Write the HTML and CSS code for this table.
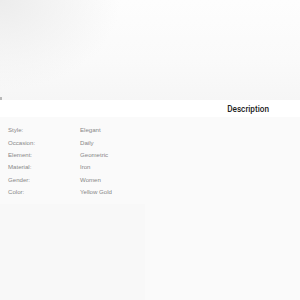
FILE: index.html
```html
<!DOCTYPE html>
<html>
<head>
<meta charset="utf-8">
<link rel="stylesheet" href="styles.css">
</head>
<body>
<div class="hero">
  <span class="hero-dot"></span>
</div>
<div class="tabbar">
  <span class="tab-title">Description</span>
</div>
<div class="specs">
  <div class="row"><span class="label">Style:</span><span class="value">Elegant</span></div>
  <div class="row"><span class="label">Occasion:</span><span class="value">Daily</span></div>
  <div class="row"><span class="label">Element:</span><span class="value">Geometric</span></div>
  <div class="row"><span class="label">Material:</span><span class="value">Iron</span></div>
  <div class="row"><span class="label">Gender:</span><span class="value">Women</span></div>
  <div class="row"><span class="label">Color:</span><span class="value">Yellow Gold</span></div>
</div>
<div class="bottom"></div>
</body>
</html>
```
FILE: styles.css
```css
html, body {
  margin: 0;
  padding: 0;
  width: 300px;
  height: 300px;
  overflow: hidden;
  background: #fafafa;
  font-family: "Liberation Sans", Arial, sans-serif;
}
.hero {
  position: relative;
  height: 100px;
  background:
    radial-gradient(ellipse 120px 90px at 0 0, #ececec 0%, rgba(240,240,240,0) 100%),
    linear-gradient(180deg, #fdfdfd 0%, #fafafa 60%, #f6f6f6 100%);
}
.hero-dot {
  position: absolute;
  left: 0;
  top: 97px;
  width: 2px;
  height: 3px;
  background: #b8b8b8;
}
.tabbar {
  height: 17px;
  background: #ffffff;
  display: flex;
  align-items: center;
  justify-content: flex-end;
  padding-right: 31px;
}
.tab-title {
  font-family: Roboto, "Liberation Sans", sans-serif;
  font-size: 8.2px;
  font-weight: 500;
  color: #222;
}
.specs {
  padding: 6.5px 0 0 8px;
  display: flex;
  flex-direction: column;
}
.row {
  display: flex;
  height: 12.4px;
  align-items: center;
  font-size: 6.1px;
  color: #888;
}
.label {
  width: 72px;
}
.bottom {
  margin: 6px 0 0 0;
  height: 100px;
  width: 145px;
  background: #f8f8f8;
}
```
